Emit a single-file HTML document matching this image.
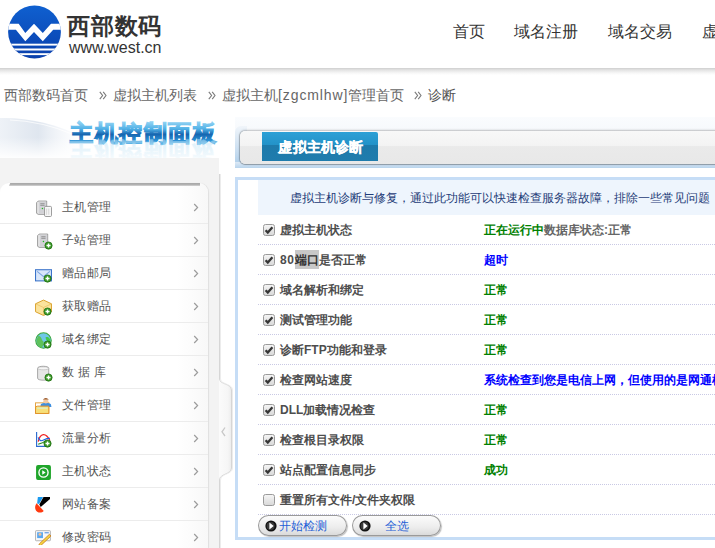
<!DOCTYPE html>
<html><head><meta charset="utf-8">
<style>
*{margin:0;padding:0;box-sizing:border-box}
html,body{width:715px;height:548px;overflow:hidden;background:#fff;font-family:"Liberation Sans",sans-serif;position:relative}
#header{position:absolute;left:0;top:0;width:715px;height:68px;background:#fff;z-index:2}
#logo{position:absolute;left:0;top:0}
.brand{position:absolute;left:67px;top:13px;font-size:23px;line-height:26px;font-weight:bold;color:#333;letter-spacing:0.8px;white-space:nowrap}
.url{position:absolute;left:69px;top:39px;font-size:16px;line-height:18px;color:#333;white-space:nowrap}
.nav{position:absolute;top:23px;font-size:16px;line-height:18px;color:#333;white-space:nowrap}
#crumb{position:absolute;left:0;top:86px;font-size:14px;line-height:18px;color:#666;white-space:nowrap}
#crumb span{position:absolute;top:0;white-space:nowrap}
#crumb i{font-style:normal;letter-spacing:0.9px}
#crumb .sep{position:absolute;top:5px}
#crumb .last{color:#555}
#title{position:absolute;left:0;top:112px;width:222px;height:46px}
#side{position:absolute;left:0;top:158px;width:219px;height:390px;background:#f3f3f3}
#menu{position:absolute;left:0;top:0;width:0;height:0}
.mi{position:absolute;left:0;width:208px;height:33px;border-bottom:1px solid #ececec}
.mi .t{position:absolute;left:62px;top:9px;letter-spacing:0.4px;font-size:12px;line-height:14px;color:#555;white-space:nowrap}
.ic{position:absolute}
.arr{position:absolute;left:193px}
#mpanel{position:absolute;left:0;top:183px;width:208px;height:365px;background:linear-gradient(90deg,#fff 0,#fff 85%,#f8f8f8 100%);border-radius:9px 9px 0 0;box-shadow:1px 0 1px rgba(0,0,0,0.08)}
#mtop{position:absolute;left:9px;top:182.5px;width:191px;height:3.2px;background:linear-gradient(#a6a6a6,#bcbcbc);clip-path:polygon(1.5px 0,100% 0,100% 100%,0 100%)}
#handle{position:absolute;left:208px;top:158px}
#tabwrap{position:absolute;left:235px;top:117px;width:480px;height:51px;background:linear-gradient(#fafcfe,#f3f6fa 60%,#e8eef5)}
#tabl{position:absolute;left:235px;top:126px;width:12px;height:42px;border-radius:6px 0 0 0;background:linear-gradient(#f0f5fa,#c8ddf0 60%,#a9cbe8)}
#tabb{position:absolute;left:235px;top:162px;width:480px;height:6px;background:linear-gradient(#dde9f5,#b9d4ec)}
#tabbar{position:absolute;left:240px;top:131px;width:480px;height:33px;border-radius:5px 0 0 5px;background:linear-gradient(#f8f8f8 0,#f3f3f3 46%,#eaeaea 47%,#e8e8e8 100%);box-shadow:0 1px 1px rgba(0,0,0,0.3),0 -1px 2px rgba(0,0,0,0.22), -1px 0 1px rgba(0,0,0,0.18)}
#tab{position:absolute;left:262px;top:132px;width:116px;height:29px;border-radius:0 2px 0 0;background:linear-gradient(#2ca0d6 0,#2392c8 45%,#1e7aab 46%,#1f7cad 100%);color:#fff;font-weight:bold;font-size:14px;line-height:29px;text-align:center;white-space:nowrap;-webkit-text-stroke:0.3px #fff;letter-spacing:0.2px;padding-top:1px;text-indent:2px}
#box{position:absolute;left:235px;top:177px;width:480px;height:363px;border:3px solid #c6ddf6;border-right:none;background:#fff}
#desc{position:absolute;left:258px;top:180px;width:457px;height:35px;background:#eef5fd;font-size:12px;line-height:14px;color:#1e3c78;white-space:nowrap}
#desc span{position:absolute;left:32px;top:11px}
.row{position:absolute;left:258px;width:457px;height:30px;border-bottom:1px dotted #c9c9e4}
.row .cb{position:absolute;left:5px;top:9px}
.row .lbl{position:absolute;left:22px;top:8px;font-size:12px;line-height:14px;font-weight:bold;color:#4d4d4d;white-space:nowrap}
.row .res{position:absolute;left:226px;top:8px;font-size:12px;line-height:14px;font-weight:bold;white-space:nowrap}
.hl{background:#c8c8c8;padding:3px 0 2px 0;margin-left:0.5px;color:#333}
.dg{letter-spacing:0.7px}
.g{color:#008000}.b{color:#0000ff}.gr{color:#666}
.btn{position:absolute;top:515px;height:21px;border-radius:11px;background:linear-gradient(#fdfdfd,#ececec 60%,#d8d8d8);box-shadow:inset 0 0 0 1px #9a9a9a,1px 1px 1px rgba(0,0,0,0.25);font-size:12px;line-height:15px;color:#1f5fd6;white-space:nowrap}
.btn svg{position:absolute;left:7px;top:4.5px}
.btn span{position:absolute;top:3.5px;letter-spacing:0.1px}

#ttls{position:absolute;left:0;top:112px}
#hshadow{position:absolute;left:0;top:68px;width:715px;height:7px;background:linear-gradient(#cfcfcf,#e4e4e4 30%,#f6f6f6 70%,#fff)}

</style></head><body>
<div id="hshadow"></div>
<div id="header">
  <svg id="logo" width="70" height="66" viewBox="0 0 70 66">
    <defs><clipPath id="cc"><circle cx="34.5" cy="32" r="26.4"/></clipPath>
    <linearGradient id="lg" x1="0" y1="0" x2="0" y2="1"><stop offset="0" stop-color="#0f60d0"/><stop offset="1" stop-color="#0a40ac"/></linearGradient></defs>
    <circle cx="34.5" cy="32" r="26.4" fill="url(#lg)"/>
    <g clip-path="url(#cc)" fill="#fff">
      <polygon points="0,23.8 18.7,23.8 25.3,33.1 34,23.8 42.8,33.1 51,23.8 70,23.8 70,29.8 53.2,29.8 42.8,41.3 34,32 25.3,41.3 15.9,29.8 0,29.8"/>
      <rect x="0" y="43.7" width="70" height="1.9"/>
      <rect x="0" y="48.5" width="70" height="2"/>
      <rect x="0" y="53.2" width="70" height="1.9"/>
    </g>
  </svg>
  <div class="brand">西部数码</div>
  <div class="url">www.west.cn</div>
  <div class="nav" style="left:453px">首页</div>
  <div class="nav" style="left:514px">域名注册</div>
  <div class="nav" style="left:608px">域名交易</div>
  <div class="nav" style="left:702px">虚拟主机</div>
</div>
<div id="crumb"><span style="left:4px">西部数码首页</span><svg class="sep" style="left:99px" width="8" height="9" viewBox="0 0 8 9"><path d="M0.8 0.8 L3.6 4.5 L0.8 8.2 M4.2 0.8 L7 4.5 L4.2 8.2" fill="none" stroke="#7a7a7a" stroke-width="1.1"/></svg><span style="left:112.5px">虚拟主机列表</span><svg class="sep" style="left:207.5px" width="8" height="9" viewBox="0 0 8 9"><path d="M0.8 0.8 L3.6 4.5 L0.8 8.2 M4.2 0.8 L7 4.5 L4.2 8.2" fill="none" stroke="#7a7a7a" stroke-width="1.1"/></svg><span style="left:222px">虚拟主机<i>[zgcmlhw]</i>管理首页</span><svg class="sep" style="left:414px" width="8" height="9" viewBox="0 0 8 9"><path d="M0.8 0.8 L3.6 4.5 L0.8 8.2 M4.2 0.8 L7 4.5 L4.2 8.2" fill="none" stroke="#7a7a7a" stroke-width="1.1"/></svg><span class="last" style="left:428px">诊断</span></div>
<svg id="title" width="222" height="46" viewBox="0 0 222 46">
  <defs>
    <linearGradient id="sw" x1="0" y1="0" x2="1" y2="0"><stop offset="0" stop-color="#eef2f7"/><stop offset="0.45" stop-color="#dfe6ef"/><stop offset="1" stop-color="#f4f7fb" stop-opacity="0"/></linearGradient>
    <linearGradient id="swv" x1="0" y1="0" x2="0" y2="1"><stop offset="0" stop-color="#fff" stop-opacity="0"/><stop offset="0.55" stop-color="#fff" stop-opacity="0"/><stop offset="1" stop-color="#fff" stop-opacity="0.95"/></linearGradient>
  </defs>
  <path d="M0 6 C25 5 55 11 85 26 L85 46 L0 46Z" fill="url(#sw)"/>
  <path d="M10 8 C35 9 55 15 72 22" fill="none" stroke="#fff" stroke-width="1.2" opacity="0.7"/>
  <rect x="0" y="0" width="90" height="46" fill="url(#swv)"/>
</svg>
<svg id="ttls" width="222" height="50" viewBox="0 0 222 50">
  <defs>
    <linearGradient id="tg" x1="0" y1="0" x2="0" y2="1"><stop offset="0" stop-color="#a4dcf7"/><stop offset="0.35" stop-color="#4fb0e6"/><stop offset="0.55" stop-color="#1766b0"/><stop offset="0.8" stop-color="#2d93d6"/><stop offset="1" stop-color="#8ad0f3"/></linearGradient>
    <linearGradient id="rg" x1="0" y1="0" x2="0" y2="1"><stop offset="0" stop-color="#c8e8f8" stop-opacity="0.0"/><stop offset="1" stop-color="#bfe3f6" stop-opacity="0.7"/></linearGradient>
  </defs>
  <g font-family="Liberation Sans" font-size="22.5" font-weight="bold" letter-spacing="1.6">
  <text x="70" y="29" fill="url(#tg)" stroke="url(#tg)" stroke-width="1.1" stroke-linejoin="miter">主机控制面板</text>
  <text x="70" y="-31" transform="scale(1,-1)" fill="url(#rg)" stroke="url(#rg)" stroke-width="1.1" opacity="0.6">主机控制面板</text>
  </g>
</svg>
<div id="side"></div>
<div id="mpanel"></div>
<div id="mtop"></div>
<div id="menu">
<div class="mi" style="top:191px"><span class="t">主机管理</span></div>
<div class="mi" style="top:224px"><span class="t">子站管理</span></div>
<div class="mi" style="top:257px"><span class="t">赠品邮局</span></div>
<div class="mi" style="top:290px"><span class="t">获取赠品</span></div>
<div class="mi" style="top:323px"><span class="t">域名绑定</span></div>
<div class="mi" style="top:356px"><span class="t">数 据 库</span></div>
<div class="mi" style="top:389px"><span class="t">文件管理</span></div>
<div class="mi" style="top:422px"><span class="t">流量分析</span></div>
<div class="mi" style="top:455px"><span class="t">主机状态</span></div>
<div class="mi" style="top:488px"><span class="t">网站备案</span></div>
<div class="mi" style="top:521px"><span class="t">修改密码</span></div>
</div>
<svg class="ic" style="left:35px;top:200px" width="17" height="17" viewBox="0 0 16 16"><g transform="translate(0,0)"><path d="M1.5 2.5 L3 1 H11 V13.5 H3 L1.5 12.5Z" fill="#e8e8e8" stroke="#8a8a8a" stroke-width="0.8"/><rect x="3.5" y="1.5" width="7" height="11.5" fill="#d2d2d6"/><path d="M5 3.5h4M5 5h4" stroke="#888" stroke-width="0.8"/><circle cx="7" cy="8" r="0.7" fill="#2b2"/><rect x="9" y="6" width="6.5" height="9.5" rx="1" fill="#fafafa" stroke="#8a8a8a" stroke-width="0.8"/><path d="M11 8v6M13 8v6" stroke="#ccc" stroke-width="0.8"/></g></svg>
<svg class="ic" style="left:35.5px;top:233px" width="17" height="17" viewBox="0 0 16 16"><path d="M1.5 2.5 L3 1 H11 V13.5 H3 L1.5 12.5Z" fill="#e8e8e8" stroke="#8a8a8a" stroke-width="0.8"/><rect x="3.5" y="1.5" width="7" height="11.5" fill="#d2d2d6"/><path d="M5 3.5h4M5 5h4" stroke="#888" stroke-width="0.8"/><circle cx="7" cy="8" r="0.7" fill="#2b2"/><g><circle cx="11.8" cy="11.8" r="3.4" fill="#3a9a26" stroke="#1e6a10" stroke-width="0.7"/><path d="M11.8 9.9v3.8M9.9 11.8h3.8" stroke="#fff" stroke-width="1.3"/></g></svg>
<svg class="ic" style="left:35px;top:265.5px" width="17" height="17" viewBox="0 0 16 16"><rect x="0.5" y="3.5" width="15" height="10.5" fill="#d8e6fa" stroke="#3a73c9" stroke-width="1"/><path d="M2 5l6 5 6-5" fill="none" stroke="#7aa3e0" stroke-width="1"/><g><circle cx="11.8" cy="11.8" r="3.4" fill="#3a9a26" stroke="#1e6a10" stroke-width="0.7"/><path d="M11.8 9.9v3.8M9.9 11.8h3.8" stroke="#fff" stroke-width="1.3"/></g></svg>
<svg class="ic" style="left:35px;top:299px" width="17" height="17" viewBox="0 0 16 16"><path d="M8 1 L15.5 4.5 V12 L8 15.5 L0.5 12 V4.5Z" fill="#fbe39c" stroke="#d9a02a" stroke-width="0.9"/><path d="M0.5 4.5 L8 8 L15.5 4.5 M8 8V15.5" fill="none" stroke="#e8c060" stroke-width="0.7"/><g><circle cx="11.8" cy="11.8" r="3.4" fill="#3a9a26" stroke="#1e6a10" stroke-width="0.7"/><path d="M11.8 9.9v3.8M9.9 11.8h3.8" stroke="#fff" stroke-width="1.3"/></g></svg>
<svg class="ic" style="left:35px;top:332px" width="17" height="17" viewBox="0 0 16 16"><circle cx="8" cy="8" r="7.3" fill="#6fc7e8" stroke="#3ea83a" stroke-width="1"/><path d="M3 4 C6 3 6 8 8 9 C9 12 7 14 6 15 C3 13 1 10 1.5 7Z" fill="#5ec25a"/><path d="M10 5 C13 4 15 7 14.5 10 C12 9 10 8 10 5Z" fill="#43c94a"/><g><circle cx="11.8" cy="11.8" r="3.4" fill="#3a9a26" stroke="#1e6a10" stroke-width="0.7"/><path d="M11.8 9.9v3.8M9.9 11.8h3.8" stroke="#fff" stroke-width="1.3"/></g></svg>
<svg class="ic" style="left:36px;top:365px" width="17" height="17" viewBox="0 0 16 16"><path d="M1.5 3 C1.5 0.6 12 0.6 12 3 V12.5 C12 14.9 1.5 14.9 1.5 12.5Z" fill="#e6e6e6" stroke="#9a9a9a" stroke-width="0.8"/><path d="M1.5 3 C1.5 5 12 5 12 3" fill="#fbfbfb" stroke="#b5b5b5" stroke-width="0.6"/><g><circle cx="11.8" cy="11.8" r="3.4" fill="#3a9a26" stroke="#1e6a10" stroke-width="0.7"/><path d="M11.8 9.9v3.8M9.9 11.8h3.8" stroke="#fff" stroke-width="1.3"/></g></svg>
<svg class="ic" style="left:35px;top:397px" width="17" height="17" viewBox="0 0 16 16"><rect x="0.5" y="5.5" width="12.5" height="10" fill="#fff" stroke="#e3a03a" stroke-width="0.9"/><path d="M5 9.5 L5.5 6.8 C6.5 5.2 14 5.2 15 6.8 L15.5 9.5Z" fill="#3d8fe0"/><circle cx="10.2" cy="3.9" r="2.3" fill="#f3c9a2"/><path d="M7.6 3.4 C7.4 0 13 0 12.8 3.4 L12.1 2.4 H8.3Z" fill="#9a5a2e"/><path d="M0.5 9.2 L2.5 8.6 H13 V15.5 H0.5Z" fill="#f7df78" stroke="#e0902a" stroke-width="0.9"/><path d="M2 10.5 H11.8" stroke="#d9efd0" stroke-width="1.1"/></svg>
<svg class="ic" style="left:35px;top:431px" width="17" height="17" viewBox="0 0 16 16"><path d="M1.5 1 V14.5 H14" fill="none" stroke="#2e6ed0" stroke-width="1.1"/><path d="M3 10 C5 2 10 1 14 9" fill="none" stroke="#f02020" stroke-width="1.2"/><path d="M3 6 C5 13 9 6 14 7" fill="none" stroke="#2060e0" stroke-width="1.1"/><path d="M3 12.5 L7 11 L10 9.5" fill="none" stroke="#2a8a20" stroke-width="1"/><g><circle cx="11.8" cy="11.8" r="3.4" fill="#3a9a26" stroke="#1e6a10" stroke-width="0.7"/><path d="M11.8 9.9v3.8M9.9 11.8h3.8" stroke="#fff" stroke-width="1.3"/></g></svg>
<svg class="ic" style="left:35px;top:464px" width="17" height="17" viewBox="0 0 16 16"><rect x="1" y="1" width="14" height="14" rx="1.8" fill="#1fa52a"/><circle cx="8" cy="8" r="4.3" fill="none" stroke="#fff" stroke-width="1.3"/><path d="M6.8 5.8 L10 8 L6.8 10.2Z" fill="#fff"/></svg>
<svg class="ic" style="left:35px;top:497px" width="17" height="17" viewBox="0 0 16 16"><path d="M2.7 0.1 H7.6 L3.8 6.6 L2 6.1Z" fill="#1a9af0"/><path d="M8 0.1 H14.1 V1.8 L5.4 9.4 L4 7Z" fill="#000"/><path d="M1.5 5.8 L8.2 13.1 C6 15.6 1.5 15.2 0.3 11.2 C-0.2 9.2 0.4 7.2 1.5 5.8Z" fill="#ff3a10"/></svg>
<svg class="ic" style="left:35px;top:527.5px" width="17" height="17" viewBox="0 0 16 16"><rect x="0.5" y="2.5" width="14" height="9.5" rx="0.6" fill="#f8f8f8" stroke="#aaa" stroke-width="0.8"/><rect x="2" y="4" width="5.5" height="5.5" fill="#5aa8ef"/><circle cx="4.7" cy="6" r="1.4" fill="#f0c09a"/><path d="M9 4.5h4" stroke="#3a7fe0" stroke-width="0.9"/><path d="M4 15 L13.5 6 L15 7.5 L5.5 16.5 L3.5 16.8Z" fill="#f6d840" stroke="#c97a1a" stroke-width="0.8"/></svg>
<svg class="arr" style="top:203px" width="6" height="9" viewBox="0 0 6 9"><path d="M1.2 1 L4.6 4.5 L1.2 8" fill="none" stroke="#9c9c9c" stroke-width="1.2"/></svg>
<svg class="arr" style="top:236px" width="6" height="9" viewBox="0 0 6 9"><path d="M1.2 1 L4.6 4.5 L1.2 8" fill="none" stroke="#9c9c9c" stroke-width="1.2"/></svg>
<svg class="arr" style="top:269px" width="6" height="9" viewBox="0 0 6 9"><path d="M1.2 1 L4.6 4.5 L1.2 8" fill="none" stroke="#9c9c9c" stroke-width="1.2"/></svg>
<svg class="arr" style="top:302px" width="6" height="9" viewBox="0 0 6 9"><path d="M1.2 1 L4.6 4.5 L1.2 8" fill="none" stroke="#9c9c9c" stroke-width="1.2"/></svg>
<svg class="arr" style="top:335px" width="6" height="9" viewBox="0 0 6 9"><path d="M1.2 1 L4.6 4.5 L1.2 8" fill="none" stroke="#9c9c9c" stroke-width="1.2"/></svg>
<svg class="arr" style="top:368px" width="6" height="9" viewBox="0 0 6 9"><path d="M1.2 1 L4.6 4.5 L1.2 8" fill="none" stroke="#9c9c9c" stroke-width="1.2"/></svg>
<svg class="arr" style="top:401px" width="6" height="9" viewBox="0 0 6 9"><path d="M1.2 1 L4.6 4.5 L1.2 8" fill="none" stroke="#9c9c9c" stroke-width="1.2"/></svg>
<svg class="arr" style="top:434px" width="6" height="9" viewBox="0 0 6 9"><path d="M1.2 1 L4.6 4.5 L1.2 8" fill="none" stroke="#9c9c9c" stroke-width="1.2"/></svg>
<svg class="arr" style="top:467px" width="6" height="9" viewBox="0 0 6 9"><path d="M1.2 1 L4.6 4.5 L1.2 8" fill="none" stroke="#9c9c9c" stroke-width="1.2"/></svg>
<svg class="arr" style="top:500px" width="6" height="9" viewBox="0 0 6 9"><path d="M1.2 1 L4.6 4.5 L1.2 8" fill="none" stroke="#9c9c9c" stroke-width="1.2"/></svg>
<svg class="arr" style="top:533px" width="6" height="9" viewBox="0 0 6 9"><path d="M1.2 1 L4.6 4.5 L1.2 8" fill="none" stroke="#9c9c9c" stroke-width="1.2"/></svg>
<svg id="handle" width="27" height="390" viewBox="0 0 27 390">
  <defs><linearGradient id="hg" x1="0" y1="0" x2="1" y2="0"><stop offset="0" stop-color="#fbfbfb"/><stop offset="0.7" stop-color="#f6f6f6"/><stop offset="1" stop-color="#ececec"/></linearGradient></defs>
  <rect x="11" y="0" width="16" height="390" fill="#fff"/>
  <path d="M11 221 C11 226, 23.5 226, 23.5 232 V310 C23.5 316, 11 316, 11 322Z" fill="url(#hg)"/>
  <path d="M11.5 16 V221 C11.5 226.5, 23.5 225.5, 23.5 232 V310 C23.5 316.5, 11.5 315.5, 11.5 322 V390" fill="none" stroke="#d6d6d6" stroke-width="1"/>
  <path d="M12.5 16 V221 C12.5 226.5, 24.5 225.5, 24.5 232 V310 C24.5 316.5, 12.5 315.5, 12.5 322 V390" fill="none" stroke="#ececec" stroke-width="1"/>
  <path d="M17 269.5 L14 273.8 L17 278" fill="none" stroke="#c8c8c8" stroke-width="1.3"/>
</svg>
<div id="tabwrap"></div><div id="tabl"></div><div id="tabb"></div>
<div id="tabbar"></div>
<div id="tab">虚拟主机诊断</div>
<div id="box"></div>
<div id="desc"><span>虚拟主机诊断与修复，通过此功能可以快速检查服务器故障，排除一些常见问题</span></div>
<div class="row" style="top:215px"><svg class="cb" width="12" height="12" viewBox="0 0 12 12"><defs><linearGradient id="cbg" x1="0" y1="0" x2="0" y2="1"><stop offset="0" stop-color="#f6f6f6"/><stop offset="1" stop-color="#d8d8d8"/></linearGradient></defs><rect x="0.5" y="0.5" width="11" height="11" rx="2" fill="url(#cbg)" stroke="#9a9a9a"/><path d="M2.6 6.2 L4.8 8.6 L9.4 3.2" fill="none" stroke="#363636" stroke-width="2.3"/></svg><span class="lbl">虚拟主机状态</span><span class="res"><span class="g">正在运行中</span><span class="gr">数据库状态:正常</span></span></div>
<div class="row" style="top:245px"><svg class="cb" width="12" height="12" viewBox="0 0 12 12"><defs><linearGradient id="cbg" x1="0" y1="0" x2="0" y2="1"><stop offset="0" stop-color="#f6f6f6"/><stop offset="1" stop-color="#d8d8d8"/></linearGradient></defs><rect x="0.5" y="0.5" width="11" height="11" rx="2" fill="url(#cbg)" stroke="#9a9a9a"/><path d="M2.6 6.2 L4.8 8.6 L9.4 3.2" fill="none" stroke="#363636" stroke-width="2.3"/></svg><span class="lbl"><span class="dg">80</span><span class="hl">端口</span>是否正常</span><span class="res"><span class="b">超时</span></span></div>
<div class="row" style="top:275px"><svg class="cb" width="12" height="12" viewBox="0 0 12 12"><defs><linearGradient id="cbg" x1="0" y1="0" x2="0" y2="1"><stop offset="0" stop-color="#f6f6f6"/><stop offset="1" stop-color="#d8d8d8"/></linearGradient></defs><rect x="0.5" y="0.5" width="11" height="11" rx="2" fill="url(#cbg)" stroke="#9a9a9a"/><path d="M2.6 6.2 L4.8 8.6 L9.4 3.2" fill="none" stroke="#363636" stroke-width="2.3"/></svg><span class="lbl">域名解析和绑定</span><span class="res"><span class="g">正常</span></span></div>
<div class="row" style="top:305px"><svg class="cb" width="12" height="12" viewBox="0 0 12 12"><defs><linearGradient id="cbg" x1="0" y1="0" x2="0" y2="1"><stop offset="0" stop-color="#f6f6f6"/><stop offset="1" stop-color="#d8d8d8"/></linearGradient></defs><rect x="0.5" y="0.5" width="11" height="11" rx="2" fill="url(#cbg)" stroke="#9a9a9a"/><path d="M2.6 6.2 L4.8 8.6 L9.4 3.2" fill="none" stroke="#363636" stroke-width="2.3"/></svg><span class="lbl">测试管理功能</span><span class="res"><span class="g">正常</span></span></div>
<div class="row" style="top:335px"><svg class="cb" width="12" height="12" viewBox="0 0 12 12"><defs><linearGradient id="cbg" x1="0" y1="0" x2="0" y2="1"><stop offset="0" stop-color="#f6f6f6"/><stop offset="1" stop-color="#d8d8d8"/></linearGradient></defs><rect x="0.5" y="0.5" width="11" height="11" rx="2" fill="url(#cbg)" stroke="#9a9a9a"/><path d="M2.6 6.2 L4.8 8.6 L9.4 3.2" fill="none" stroke="#363636" stroke-width="2.3"/></svg><span class="lbl">诊断FTP功能和登录</span><span class="res"><span class="g">正常</span></span></div>
<div class="row" style="top:365px"><svg class="cb" width="12" height="12" viewBox="0 0 12 12"><defs><linearGradient id="cbg" x1="0" y1="0" x2="0" y2="1"><stop offset="0" stop-color="#f6f6f6"/><stop offset="1" stop-color="#d8d8d8"/></linearGradient></defs><rect x="0.5" y="0.5" width="11" height="11" rx="2" fill="url(#cbg)" stroke="#9a9a9a"/><path d="M2.6 6.2 L4.8 8.6 L9.4 3.2" fill="none" stroke="#363636" stroke-width="2.3"/></svg><span class="lbl">检查网站速度</span><span class="res"><span class="b">系统检查到您是电信上网，但使用的是网通机房</span></span></div>
<div class="row" style="top:395px"><svg class="cb" width="12" height="12" viewBox="0 0 12 12"><defs><linearGradient id="cbg" x1="0" y1="0" x2="0" y2="1"><stop offset="0" stop-color="#f6f6f6"/><stop offset="1" stop-color="#d8d8d8"/></linearGradient></defs><rect x="0.5" y="0.5" width="11" height="11" rx="2" fill="url(#cbg)" stroke="#9a9a9a"/><path d="M2.6 6.2 L4.8 8.6 L9.4 3.2" fill="none" stroke="#363636" stroke-width="2.3"/></svg><span class="lbl">DLL加载情况检查</span><span class="res"><span class="g">正常</span></span></div>
<div class="row" style="top:425px"><svg class="cb" width="12" height="12" viewBox="0 0 12 12"><defs><linearGradient id="cbg" x1="0" y1="0" x2="0" y2="1"><stop offset="0" stop-color="#f6f6f6"/><stop offset="1" stop-color="#d8d8d8"/></linearGradient></defs><rect x="0.5" y="0.5" width="11" height="11" rx="2" fill="url(#cbg)" stroke="#9a9a9a"/><path d="M2.6 6.2 L4.8 8.6 L9.4 3.2" fill="none" stroke="#363636" stroke-width="2.3"/></svg><span class="lbl">检查根目录权限</span><span class="res"><span class="g">正常</span></span></div>
<div class="row" style="top:455px"><svg class="cb" width="12" height="12" viewBox="0 0 12 12"><defs><linearGradient id="cbg" x1="0" y1="0" x2="0" y2="1"><stop offset="0" stop-color="#f6f6f6"/><stop offset="1" stop-color="#d8d8d8"/></linearGradient></defs><rect x="0.5" y="0.5" width="11" height="11" rx="2" fill="url(#cbg)" stroke="#9a9a9a"/><path d="M2.6 6.2 L4.8 8.6 L9.4 3.2" fill="none" stroke="#363636" stroke-width="2.3"/></svg><span class="lbl">站点配置信息同步</span><span class="res"><span class="g">成功</span></span></div>
<div class="row" style="top:485px"><svg class="cb" width="12" height="12" viewBox="0 0 12 12"><defs><linearGradient id="cbg" x1="0" y1="0" x2="0" y2="1"><stop offset="0" stop-color="#f6f6f6"/><stop offset="1" stop-color="#d8d8d8"/></linearGradient></defs><rect x="0.5" y="0.5" width="11" height="11" rx="2" fill="url(#cbg)" stroke="#9a9a9a"/></svg><span class="lbl">重置所有文件/文件夹权限</span><span class="res"></span></div>
<div class="btn" style="left:258px;width:89px"><svg width="12" height="12" viewBox="0 0 12 12"><circle cx="6" cy="6" r="5.6" fill="#111"/><circle cx="5.6" cy="6" r="4" fill="#3a3a3a"/><path d="M4.4 2.4 L8.7 6 L4.4 9.5Z" fill="#fff"/></svg><span style="left:21px">开始检测</span></div>
<div class="btn" style="left:352px;width:89px"><svg width="12" height="12" viewBox="0 0 12 12"><circle cx="6" cy="6" r="5.6" fill="#111"/><circle cx="5.6" cy="6" r="4" fill="#3a3a3a"/><path d="M4.4 2.4 L8.7 6 L4.4 9.5Z" fill="#fff"/></svg><span style="left:33px">全选</span></div>
</body></html>
